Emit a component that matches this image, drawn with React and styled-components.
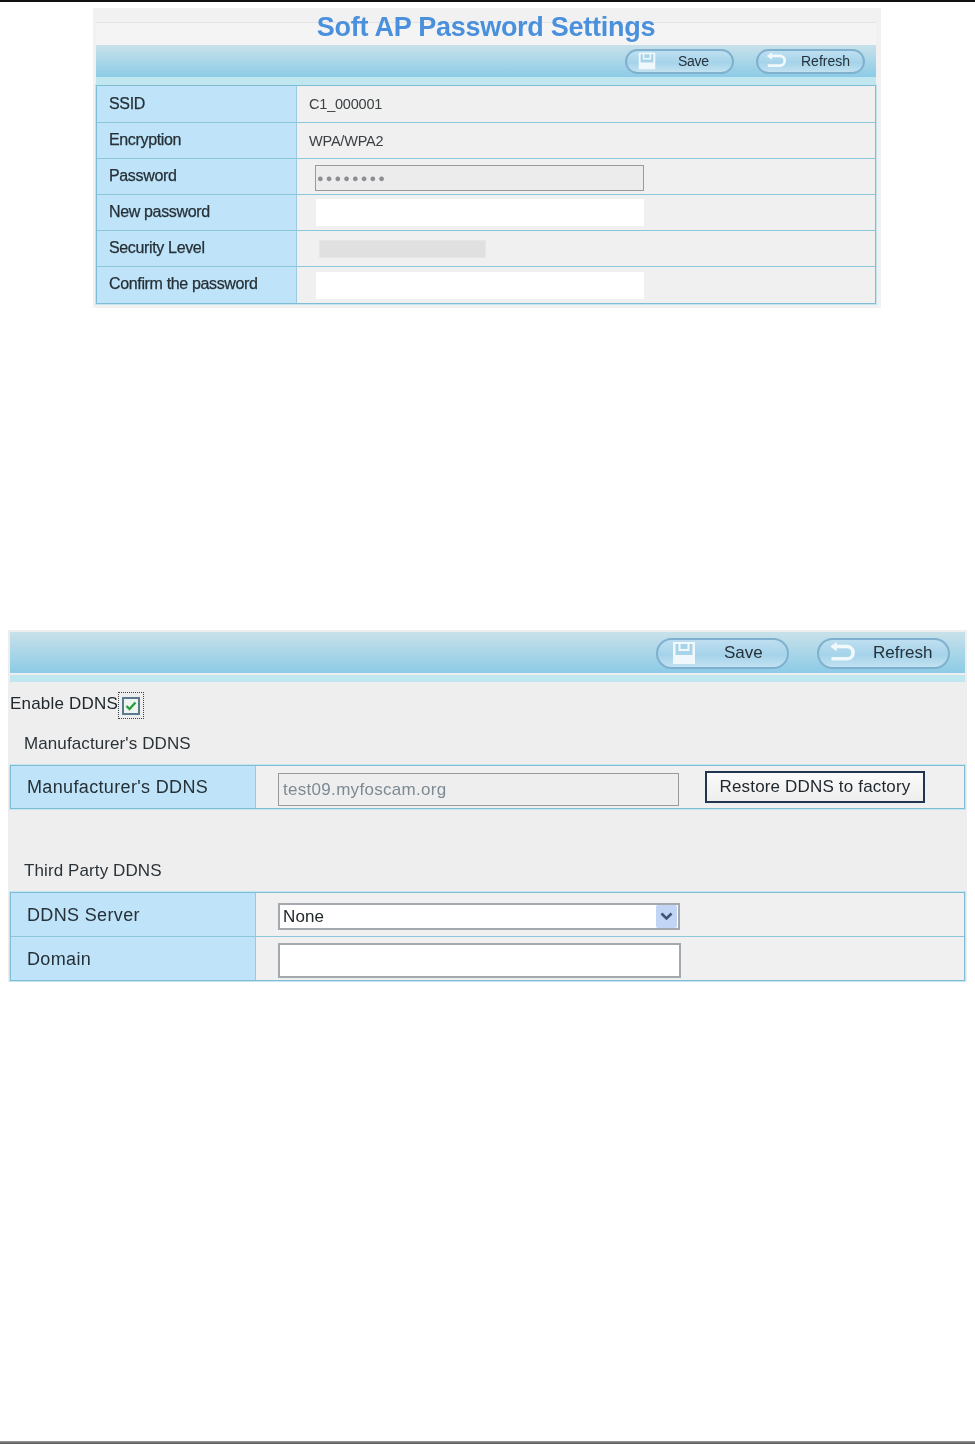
import React from "react";
import styled, { createGlobalStyle } from "styled-components";

const Global = createGlobalStyle`
	html, body {
		margin: 0;
		padding: 0;
		background: #fff;
	}
	* {
		box-sizing: border-box;
	}
`;

const Page = styled.div`
	height: 1444px;
	display: flex;
	flex-direction: column;
	font-family: "Liberation Sans", Arial, sans-serif;
	color: #2b3338;
	overflow: hidden;
`;

const TopRule = styled.div`
	height: 2px;
	background: #111;
`;

const BottomRule = styled.div`
	height: 3px;
	margin-top: auto;
	background: linear-gradient(#999, #555);
`;

const ApPanel = styled.section`
	width: 788px;
	height: 300px;
	margin: 6px 0 0 93px;
	padding: 0 5px 0 3px;
	background: #f1f1f1;
	filter: blur(0.4px);
`;

const DdnsPanel = styled.section`
	width: 959px;
	height: 352px;
	margin: 322px 0 0 8px;
	padding: 2px 2px 0;
	background: #eeeeee;
	filter: blur(0.35px);
`;

const Title = styled.h1`
	height: 37px;
	margin: 0;
	padding-top: 3px;
	text-align: center;
	font-size: 27px;
	line-height: 32px;
	font-weight: 700;
	letter-spacing: -0.26px;
	color: #4a90dc;
	background: linear-gradient(#f1f1f1 14px, #e4e4e4 14px, #e4e4e4 15px, #f4f4f4 15px);
`;

const Toolbar = styled.div`
	height: ${(p) => p.$height}px;
	padding-right: ${(p) => p.$inset}px;
	padding-top: ${(p) => p.$top || 0}px;
	display: flex;
	align-items: center;
	justify-content: flex-end;
	gap: ${(p) => p.$gap}px;
	background: linear-gradient(#c8e1ea, #8ccbe6);
`;

const Band = styled.div`
	height: ${(p) => p.$height}px;
	margin-top: ${(p) => p.$top}px;
	background: #c0e6f0;
`;

const Pill = styled.div`
	width: ${(p) => p.$width}px;
	height: ${(p) => p.$height}px;
	flex: none;
	display: flex;
	align-items: center;
	padding-left: ${(p) => p.$iconLeft}px;
	border: 2px solid #7fb1cf;
	border-radius: 16px;
	background: linear-gradient(#bfdff0, #a5d3ea 55%, #c2e1f0);
	font-size: ${(p) => p.$font}px;
	color: #26313a;
	letter-spacing: ${(p) => p.$spacing}px;
`;

const PillText = styled.span`
	margin-left: ${(p) => p.$left}px;
`;

const Table = styled.div`
	border: 1px solid #7fbdd6;
	box-shadow: 0 0 0 1px #c4e6ee;
`;

const Row = styled.div`
	height: ${(p) => p.$height}px;
	display: grid;
	grid-template-columns: ${(p) => p.$label}px 1fr;
	border-top: ${(p) => (p.$first ? "0" : "1px solid #8cc6da")};
`;

const Label = styled.div`
	display: flex;
	align-items: center;
	padding: ${(p) => p.$lift || "0"} 0 ${(p) => p.$drop || "0"} ${(p) => p.$pad}px;
	background: #bfe3f8;
	border-right: 1px solid #9cc9dc;
	font-size: ${(p) => p.$font}px;
	letter-spacing: ${(p) => p.$spacing}px;
	-webkit-text-stroke: ${(p) => p.$stroke || 0}px #263037;
	color: #263037;
`;

const Value = styled.div`
	display: flex;
	align-items: center;
	gap: ${(p) => p.$gap || 0}px;
	padding-left: ${(p) => p.$pad}px;
	background: ${(p) => p.$bg || "#f0f0f0"};
	font-size: 14.5px;
	letter-spacing: -0.2px;
	color: #3c4144;
`;

const Box = styled.input`
	display: block;
	flex: none;
	width: ${(p) => p.$width}px;
	height: ${(p) => p.$height}px;
	margin: ${(p) => p.$margin || "0"};
	padding: 0 ${(p) => (p.$pad === undefined ? 4 : p.$pad)}px;
	border: ${(p) => p.$border || "0"};
	outline: none;
	border-radius: 0;
	background: ${(p) => p.$bg || "#fff"};
	font-family: inherit;
	font-size: ${(p) => p.$font || 13}px;
	letter-spacing: ${(p) => p.$spacing || 0}px;
	color: ${(p) => p.$color || "#8e9499"};
`;

const LevelBar = styled.div`
	width: 167px;
	height: 18px;
	margin-left: 4px;
	background: #e0e0e0;
	border: 1px solid #e6e6e6;
`;

const EnableRow = styled.div`
	height: 27px;
	margin-top: 10px;
	display: flex;
	align-items: center;
	font-size: 17px;
	letter-spacing: 0.2px;
	color: #20282d;
`;

const EnableText = styled.span`
	margin-top: -4px;
`;

const Focus = styled.div`
	width: 26px;
	height: 27px;
	display: flex;
	align-items: center;
	justify-content: center;
	border: 1px dotted #39424a;
`;

const Check = styled.div`
	width: 18px;
	height: 18px;
	display: flex;
	align-items: center;
	justify-content: center;
	border: 2px solid #5b7a90;
	background: #eef4ee;
`;

const Heading = styled.div`
	height: 46px;
	margin-top: ${(p) => p.$top}px;
	padding: 3px 0 0 14px;
	display: flex;
	align-items: center;
	font-size: 17px;
	letter-spacing: 0.1px;
	color: #2b3338;
`;

const RestoreButton = styled.div`
	width: 220px;
	height: 32px;
	flex: none;
	display: flex;
	align-items: center;
	justify-content: center;
	border: 2px solid #1f3550;
	background: linear-gradient(#fafafa, #eeeeee);
	font-size: 17px;
	letter-spacing: 0.17px;
	color: #22292e;
`;

const Select = styled.div`
	width: 402px;
	height: 27px;
	margin-top: 4px;
	display: flex;
	align-items: center;
	justify-content: space-between;
	padding: 0 1px 0 3px;
	border: 2px solid #a4a9b0;
	background: #fff;
	font-size: 17px;
	letter-spacing: 0.1px;
	color: #20282d;
`;

const Arrow = styled.div`
	width: 21px;
	height: 23px;
	display: flex;
	align-items: center;
	justify-content: center;
	border-radius: 2px;
	background: #c3d5f5;
`;

const FloppyIcon = ({ size }) => (
	<svg width={size} height={size} viewBox="0 0 24 24" fill="none">
		<path d="M1 1h22v22H1z" fill="#f0f8fc" />
		<path d="M3.500 3h17v11h-17z" fill="#a8d4ea" />
		<path d="M6.500 1h11v9h-11z" fill="#f0f8fc" />
		<path d="M8.500 3h7v5h-7z" fill="#a8d4ea" />
	</svg>
);

const BackIcon = ({ size }) => (
	<svg width={size} height={size} viewBox="0 0 24 24" fill="none">
		<path
			d="M7 6.500h9c3.300 0 5.500 2.200 5.500 5.200S19.300 17 16 17H3"
			stroke="#f2f9fc"
			strokeWidth="3"
		/>
		<path d="M7.500 2.500v8L2 6.500z" fill="#f2f9fc" />
	</svg>
);

const ChevronIcon = () => (
	<svg width="13" height="9" viewBox="0 0 13 9" fill="none">
		<path d="M1.500 1.500l5 5 5-5" stroke="#3f5578" strokeWidth="2.6" />
	</svg>
);

const CheckIcon = () => (
	<svg width="12" height="10" viewBox="0 0 12 10" fill="none">
		<path d="M1.500 5l3 3 6-6.500" stroke="#2c9e3c" strokeWidth="2.4" />
	</svg>
);

const apLabel = { $pad: 12, $font: 16, $spacing: -0.35, $drop: "2px", $stroke: 0.25 };
const ddnsLabel = { $pad: 16, $font: 18, $spacing: 0.35, $lift: "1px" };

const App = () => (
	<Page>
		<Global />
		<TopRule />

		<ApPanel>
			<Title>Soft AP Password Settings</Title>
			<Toolbar $height={32} $inset={11} $gap={22}>
				<Pill $width={109} $height={25} $iconLeft={11} $font={14} $spacing={-0.3}>
					<FloppyIcon size={18} />
					<PillText $left={22}>Save</PillText>
				</Pill>
				<Pill $width={109} $height={25} $iconLeft={7} $font={14} $spacing={0}>
					<BackIcon size={22} />
					<PillText $left={14}>Refresh</PillText>
				</Pill>
			</Toolbar>
			<Band $top={0} $height={8} />
			<Table>
				<Row $first $height={36} $label={200}>
					<Label {...apLabel} $drop="0">SSID</Label>
					<Value $pad={12}>C1_000001</Value>
				</Row>
				<Row $height={36} $label={200}>
					<Label {...apLabel}>Encryption</Label>
					<Value $pad={12}>WPA/WPA2</Value>
				</Row>
				<Row $height={36} $label={200}>
					<Label {...apLabel}>Password</Label>
					<Value $pad={18}>
						<Box
							readOnly
							value="●●●●●●●●"
							$width={329}
							$height={26}
							$bg="#ececec"
							$border="1px solid #9a9a9a"
							$font={11}
							$spacing={2.1}
							$pad={1}
							$margin="3px 0 0"
							$color="#8d8d93"
						/>
					</Value>
				</Row>
				<Row $height={36} $label={200}>
					<Label {...apLabel}>New password</Label>
					<Value $pad={19}>
						<Box readOnly $width={328} $height={27} />
					</Value>
				</Row>
				<Row $height={36} $label={200}>
					<Label {...apLabel}>Security Level</Label>
					<Value $pad={18}>
						<LevelBar />
					</Value>
				</Row>
				<Row $height={37} $label={200}>
					<Label {...apLabel}>Confirm the password</Label>
					<Value $pad={19}>
						<Box readOnly $width={328} $height={27} />
					</Value>
				</Row>
			</Table>
		</ApPanel>

		<DdnsPanel>
			<Toolbar $height={41} $inset={15} $gap={28} $top={1}>
				<Pill $width={133} $height={31} $iconLeft={14} $font={17} $spacing={0}>
					<FloppyIcon size={24} />
					<PillText $left={28}>Save</PillText>
				</Pill>
				<Pill $width={133} $height={31} $iconLeft={9} $font={17} $spacing={0}>
					<BackIcon size={28} />
					<PillText $left={17}>Refresh</PillText>
				</Pill>
			</Toolbar>
			<Band $top={2} $height={7} />

			<EnableRow>
				<EnableText>Enable DDNS</EnableText>
				<Focus>
					<Check>
						<CheckIcon />
					</Check>
				</Focus>
			</EnableRow>

			<Heading $top={0}>Manufacturer's DDNS</Heading>
			<Table>
				<Row $first $height={42} $label={245}>
					<Label {...ddnsLabel}>Manufacturer's DDNS</Label>
					<Value $pad={22} $gap={26}>
						<Box
							readOnly
							value="test09.myfoscam.org"
							$width={401}
							$height={33}
							$bg="#eeeeee"
							$border="1px solid #9a9a9a"
							$font={17}
							$spacing={0.3}
							$margin="5px 0 0"
							$color="#7d8a92"
						/>
						<RestoreButton>Restore DDNS to factory</RestoreButton>
					</Value>
				</Row>
			</Table>

			<Heading $top={37}>Third Party DDNS</Heading>
			<Table>
				<Row $first $height={43} $label={245}>
					<Label {...ddnsLabel}>DDNS Server</Label>
					<Value $pad={22}>
						<Select>
							None
							<Arrow>
								<ChevronIcon />
							</Arrow>
						</Select>
					</Value>
				</Row>
				<Row $height={44} $label={245}>
					<Label {...ddnsLabel}>Domain</Label>
					<Value $pad={22}>
						<Box
							readOnly
							$width={403}
							$height={35}
							$border="2px solid #a4a9b0"
							$margin="3px 0 0"
						/>
					</Value>
				</Row>
			</Table>
		</DdnsPanel>

		<BottomRule />
	</Page>
);

export default App;
